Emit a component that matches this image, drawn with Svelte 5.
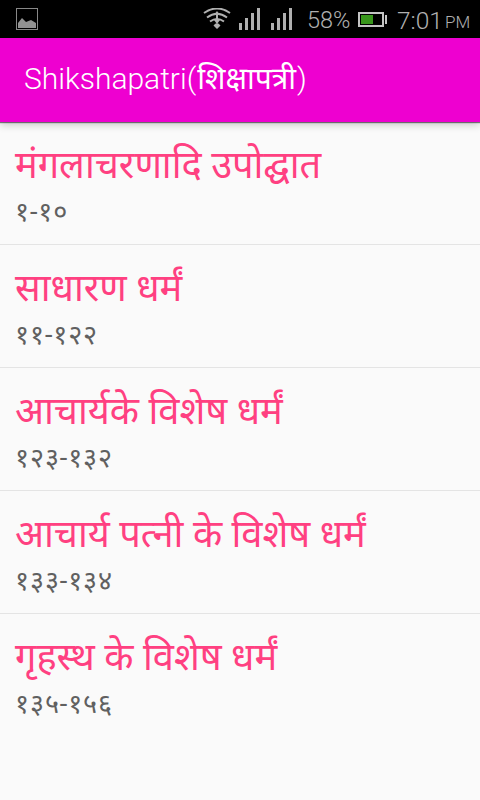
<script>
  const battery = 58;
  const clock = '7:01';
  const signals = [1, 2];
  const chapters = [
    { title: 'मंगलाचरणादि उपोद्घात', range: '१-१०' },
    { title: 'साधारण धर्मं', range: '११-१२२' },
    { title: 'आचार्यके विशेष धर्मं', range: '१२३-१३२' },
    { title: 'आचार्य पत्नी के विशेष धर्मं', range: '१३३-१३४' },
    { title: 'गृहस्थ के विशेष धर्मं', range: '१३५-१५६' },
  ]
</script>

<main>
  <div class="status">
    <svg class="picture" width="22" height="22" viewBox="0 0 22 22">
      <rect x="0.5" y="0.5" width="21" height="21" fill="none" stroke="#888" />
      <path d="M2 20v-5l4-5 4 4 5-2 5 3v5z" fill="#929292" />
    </svg>
    <svg class="wifi" width="28" height="22" viewBox="0 0 28 22">
      <g fill="none" stroke="#b0b0b0" stroke-width="2">
        <path d="M1 5Q14-4 27 5" />
        <path d="M4 9.500Q14 2 24 9.500" />
        <path d="M7 13.500Q14 8.500 21 13.500" />
      </g>
      <path d="M14 3l3 4h-2v5h2l-3 4-3-4h2V7h-2zM14 21l-3.500-3.500Q14 13 17.500 17.500z" fill="#b0b0b0" />
    </svg>
    {#each signals as s}
      <svg class="signal" width="22" height="22" viewBox="0 0 22 22">
        <path d="M0 15h3v7H0zM6 10h3v12H6zM12 5h3v17h-3zM18 0h3v22h-3z" fill="#b0b0b0" />
      </svg>
    {/each}
    <span class="percent">{battery}%</span>
    <svg class="battery" width="29" height="16" viewBox="0 0 29 16">
      <rect x="1" y="1" width="24" height="13" fill="none" stroke="#c4c4c4" stroke-width="2" />
      <rect x="3" y="3" width="12" height="9" fill="#38961b" />
      <rect x="27" y="3" width="2" height="9" fill="#c4c4c4" />
    </svg>
    <span class="clock">{clock}</span>
    <span class="pm">PM</span>
  </div>
  <header>
    <h1>Shikshapatri(<span>शिक्षापत्री</span>)</h1>
  </header>
  <div class="list">
    {#each chapters as chapter}
      <div class="row">
        <h2>{chapter.title}</h2>
        <p>{chapter.range}</p>
      </div>
    {/each}
  </div>
</main>

<style>
  :global(body) {
    margin: 0;
    background: #fafafa;
  }
  main {
    font-family: Roboto, "Noto Sans", "Noto Sans Devanagari", sans-serif;
    height: 800px;
    overflow: hidden;
    background: #fafafa;
  }
  .status {
    display: flex;
    align-items: center;
    height: 38px;
    box-sizing: border-box;
    padding-left: 16px;
    background: #000;
    color: #b0b0b0;
    font-weight: 300;
    font-size: 24px;
    white-space: nowrap;
  }
  svg {
    flex: none;
  }
  .wifi {
    margin-left: 165px;
    margin-right: 8px;
  }
  .signal {
    margin-right: 10px;
  }
  .percent {
    width: 44px;
    margin: 2px 0 0 4px;
    font-size: 23.5px;
  }
  .battery {
    margin: 1px 10px 0 7px;
  }
  .clock {
    margin-top: 2px;
    width: 43px;
    font-size: 24.500px;
  }
  .pm {
    margin: 6px 0 0 5px;
    font-size: 17px;
  }
  header {
    position: relative;
    height: 84px;
    box-sizing: border-box;
    padding-left: 24px;
    background: #ee00d0;
    color: #fff;
    box-shadow: 0 1px 1px rgba(0, 0, 0, 0.5), 0 3px 8px rgba(0, 0, 0, 0.2);
  }
  h1 {
    margin: 0;
    font-size: 30px;
    line-height: 82px;
    font-weight: 300;
  }
  h1 span {
    font-weight: 400;
    margin-left: 1px;
    margin-right: 1px;
  }
  .row {
    height: 122px;
    box-sizing: content-box;
    padding-left: 15px;
    border-bottom: 1px solid #e4e4e4;
  }
  .row:last-child {
    border-bottom: none;
  }
  h2 {
    margin: 0;
    padding-top: 15px;
    font-size: 38px;
    line-height: 56px;
    font-weight: 400;
    color: #ff4081;
    white-space: nowrap;
  }
  p {
    margin: 0;
    padding-top: 2px;
    font-size: 27px;
    line-height: 34px;
    letter-spacing: 0.9px;
    color: #606060;
  }
</style>
